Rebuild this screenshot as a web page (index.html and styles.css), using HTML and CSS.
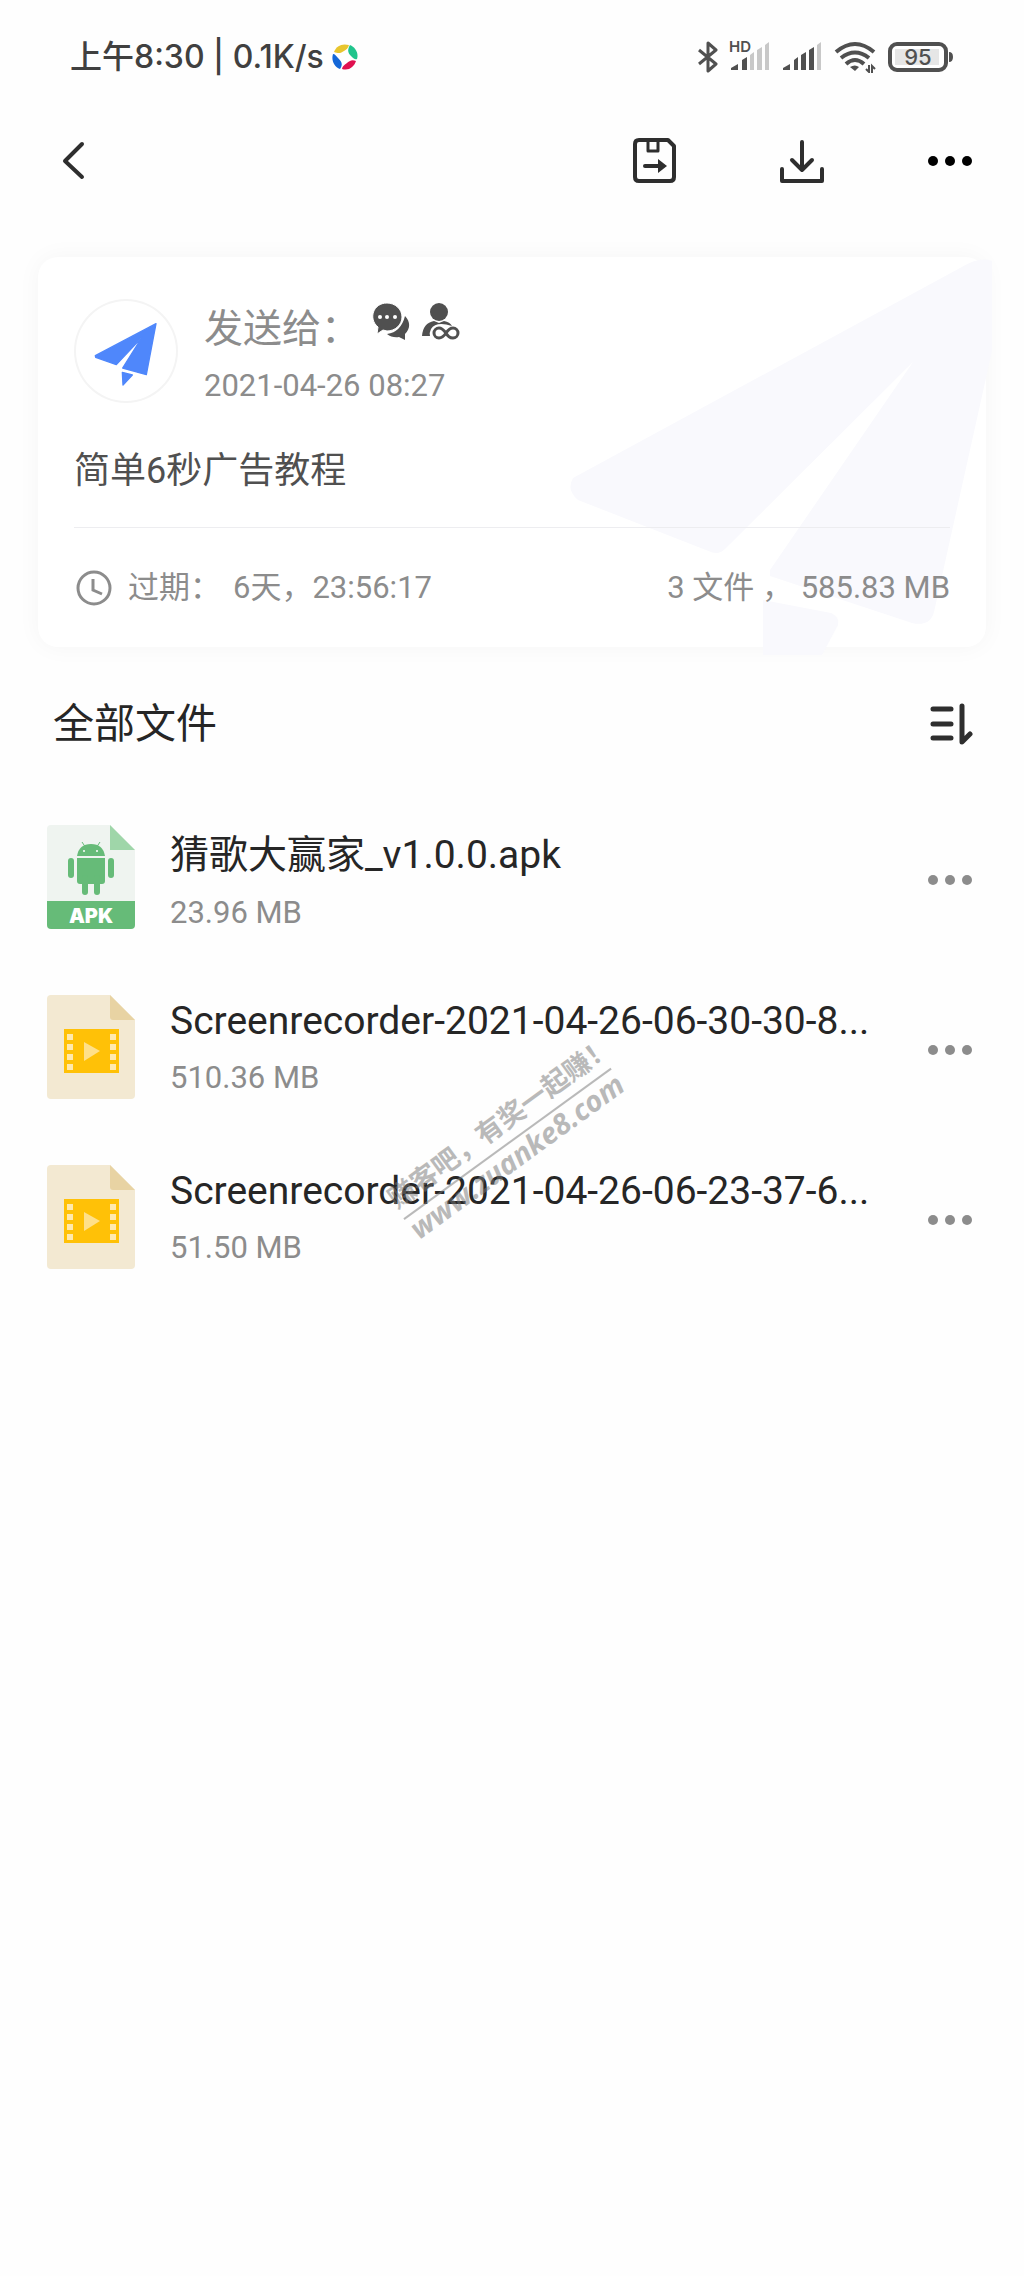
FILE: index.html
```html
<!DOCTYPE html>
<html lang="zh-CN">
<head>
<meta charset="utf-8">
<meta name="viewport" content="width=device-width, initial-scale=1">
<title>全部文件</title>
<link rel="stylesheet" href="styles.css">
</head>
<body>
<div class="status">
  <span class="status-text">上午8:30 | 0.1K/s</span>
  <svg class="status-app" width="26" height="26" viewBox="0 0 26 26" aria-hidden="true">
    <path fill="#e8c52e" d="M2 8C4 2 10-1 17 1c-1 3-2 4-5 6C9 9 7 10 2 8z"/>
    <path fill="#20c48c" d="M18 1c5 2 9 8 7 14-2 1-4-1-6-3-3-3-4-6-1-11z"/>
    <path fill="#e0104f" d="M24 17c-2 6-7 10-14 8 0-2 2-4 5-6 2-2 5-4 9-2z"/>
    <path fill="#1467d8" d="M8 25C2 23-1 16 1 10c2 0 3 2 5 4 4 4 5 6 2 11z"/>
  </svg>
  <div class="status-icons">
    <svg width="20" height="32" viewBox="0 0 20 32" aria-hidden="true"><path d="M1 9l17 14-8 7V2l8 7L1 23" fill="none" stroke="#505050" stroke-width="3" stroke-linejoin="round"/></svg>
    <div class="sim">
      <span class="sim-hd">HD</span>
      <svg width="40" height="32" viewBox="0 0 40 32" aria-hidden="true">
        <path fill="#505050" d="M1 29v-2l7-4v6zM12 29V19l5-3v13z"/>
        <path fill="#c8c8c8" d="M20 29V14l4-3v18zM27 29V9l5-3v23zM35 29V4l4-3v28z"/>
      </svg>
    </div>
    <svg width="40" height="32" viewBox="0 0 40 32" aria-hidden="true">
      <path fill="#505050" d="M1 29v-2l7-4v6zM12 29V19l4-3v13zM19 29V14l5-3v18zM27 29V9l5-3v23z"/>
      <path fill="#c8c8c8" d="M35 29V4l4-3v28z"/>
    </svg>
    <svg width="42" height="32" viewBox="0 0 42 32" aria-hidden="true">
      <path d="M2 11q19-16 38 0M7 17q14-11 28 0M12 23q9-8 18 0" fill="none" stroke="#505050" stroke-width="4"/>
      <path fill="#505050" d="M16 26q5-3 9 0l-4 4z"/>
      <path d="M32 28l3 3v-7M38 32v-7l3 3" fill="none" stroke="#505050" stroke-width="2"/>
    </svg>
    <svg width="66" height="30" viewBox="0 0 66 30" aria-hidden="true">
      <rect x="2" y="2" width="56" height="26" rx="7" fill="#fff" stroke="#505050" stroke-width="4"/>
      <rect x="7" y="7" width="44" height="16" fill="#e6e6e6"/>
      <path fill="#505050" d="M61 10q4 0 4 5t-4 5z"/>
      <text class="battery-text" x="30" y="23" text-anchor="middle">95</text>
    </svg>
  </div>
</div>

<header class="toolbar">
  <button class="icon-btn" type="button" aria-label="返回">
    <svg width="24" height="40" viewBox="0 0 24 40"><path d="M21 3L4 20l17 16" fill="none" stroke="#2e2e2e" stroke-width="4" stroke-linecap="round" stroke-linejoin="round"/></svg>
  </button>
  <div class="toolbar-actions">
    <button class="icon-btn" type="button" aria-label="保存">
      <svg width="44" height="46" viewBox="0 0 44 46"><g fill="none" stroke="#2e2e2e" stroke-width="4" stroke-linejoin="round"><path d="M6 2h29l6 6v31q0 4-4 4H6q-4 0-4-4V6q0-4 4-4z"/><path d="M15 2v11h10V2" stroke-width="3"/><path d="M12 28h17" stroke-linecap="round"/></g><path fill="#2e2e2e" d="M25 21l9 7-9 7z"/></svg>
    </button>
    <button class="icon-btn" type="button" aria-label="下载">
      <svg width="46" height="44" viewBox="0 0 46 44"><g fill="none" stroke="#2e2e2e" stroke-width="4" stroke-linecap="round" stroke-linejoin="round"><path d="M23 3v28M13 21l10 10 10-10"/><path d="M3 30v12h40V30"/></g></svg>
    </button>
    <button class="icon-btn" type="button" aria-label="更多">
      <svg width="46" height="12" viewBox="0 0 46 12"><circle cx="6" cy="6" r="5"/><circle cx="23" cy="6" r="5"/><circle cx="40" cy="6" r="5"/></svg>
    </button>
  </div>
</header>

<main>
  <section class="card">
    <svg class="card-plane" width="422" height="398" viewBox="570 257 422 398" aria-hidden="true">
      <path d="M573 478L960 268q20-12 32-7v90L934 612q-4 15-22 11l-142-47v-6L913 362 725 549q-6 6-14 3L578 500q-12-10-5-22z"/>
      <path d="M763 600l68 13q9 4 7 12l-16 30h-59z"/>
    </svg>
    <div class="sender">
      <div class="avatar">
        <svg width="104" height="104" viewBox="131 176 312 312" aria-hidden="true"><path fill="#4f87fb" stroke="#4f87fb" stroke-width="4" stroke-linejoin="round" d="M195 346L377 250l-29 153-71-20 58-92-77 82-62-22zM276 396l30 8-28 30z"/></svg>
      </div>
      <div class="sender-info">
        <div class="sender-line">
          <span class="sender-label">发送给：</span>
          <svg width="38" height="40" viewBox="0 0 38 40" aria-hidden="true">
            <path fill="#505050" d="M33 14c6 6 5 13 0 18v6l-6-3q-7 1-12-3 14-2 18-18z"/>
            <path fill="#505050" stroke="#fff" d="M15 1c8 0 15 6 15 14S23 29 15 29l-4-1-6 4 1-7C-4 17 1 1 15 1z"/>
            <g fill="#fff"><circle cx="8" cy="15" r="2"/><circle cx="15" cy="15" r="2"/><circle cx="23" cy="15" r="2"/></g>
          </svg>
          <svg width="38" height="40" viewBox="0 0 38 40" aria-hidden="true">
            <circle cx="17" cy="10" r="9" fill="#505050"/>
            <path fill="#505050" d="M0 34q1-13 12-15l5 2 5-2q6 1 8 5-16-5-21 3-2 4-1 7z"/>
            <path d="M24 31c-3-4-5-5-7-5a5 5 0 000 10c3 0 5-2 7-5s4-5 7-5a5 5 0 010 10c-3 0-5-1-7-5z" fill="none" stroke="#505050" stroke-width="3"/>
          </svg>
        </div>
        <time class="meta" datetime="2021-04-26T08:27">2021-04-26 08:27</time>
      </div>
    </div>
    <p class="message">简单6秒广告教程</p>
    <div class="card-foot meta">
      <svg width="36" height="36" viewBox="0 0 36 36" aria-hidden="true"><g fill="none" stroke="#8c8c8c" stroke-width="3"><circle cx="18" cy="18" r="16"/><path d="M17 9v11l9 4"/></g></svg>
      <span>过期：</span>
      <span>6天，23:56:17</span>
      <span class="total">3 文件 ， 585.83 MB</span>
    </div>
  </section>

  <section class="files">
    <div class="files-head">
      <h1>全部文件</h1>
      <button class="icon-btn" type="button" aria-label="排序">
        <svg width="44" height="44" viewBox="0 0 44 44"><g fill="none" stroke="#2e2e2e" stroke-width="5" stroke-linecap="round" stroke-linejoin="round"><path d="M4 7h18M4 22h18M4 36h18"/><path d="M33 4v36l8-8"/></g></svg>
      </button>
    </div>
    <ul class="list">
      <li class="row">
        <svg width="88" height="104" viewBox="0 0 88 104" aria-hidden="true">
          <path fill="#eff4f0" d="M4 0h59l25 25v51H0V4q0-4 4-4z"/>
          <path fill="#9fd6a9" d="M63 0l25 25H63z"/>
          <path fill="#66bb78" d="M0 76h88v24q0 4-4 4H4q-4 0-4-4z"/>
          <g fill="#66bb78"><path d="M30 31q2-12 14-12t14 12z"/><path d="M30 33h28v23q0 3-3 3H33q-3 0-3-3z"/><rect x="21" y="33" width="6" height="20" rx="3"/><rect x="61" y="33" width="6" height="20" rx="3"/><rect x="35" y="50" width="6" height="20" rx="3"/><rect x="47" y="50" width="6" height="20" rx="3"/></g>
          <path d="M35 17l4 6M53 17l-4 6" stroke="#66bb78"/>
          <circle cx="37" cy="26" r="1" fill="#fff"/><circle cx="50" cy="26" r="1" fill="#fff"/>
          <text class="apk-label" x="44" y="98" text-anchor="middle">APK</text>
        </svg>
        <div class="file-text"><div class="file-name">猜歌大赢家_v1.0.0.apk</div><div class="meta">23.96 MB</div></div>
        <button class="icon-btn more" type="button" aria-label="更多"><svg width="46" height="12" viewBox="0 0 46 12"><circle cx="6" cy="6" r="5"/><circle cx="23" cy="6" r="5"/><circle cx="40" cy="6" r="5"/></svg></button>
      </li>
      <li class="row">
        <svg width="88" height="104" viewBox="0 0 88 104" aria-hidden="true">
          <g id="video">
            <path fill="#f3e9d2" d="M4 0h59l25 25v75q0 4-4 4H4q-4 0-4-4V4q0-4 4-4z"/>
            <path fill="#e8d3a3" d="M63 0l25 25H66q-3 0-3-3z"/>
            <rect x="17" y="34" width="55" height="44" fill="#ffc107"/>
            <path fill="#ffe08a" d="M37 47l16 9-16 10z"/>
            <path d="M23 39v37M66 39v37" stroke="#ffe9ae" stroke-width="6" stroke-dasharray="6 4"/>
          </g>
        </svg>
        <div class="file-text"><div class="file-name">Screenrecorder-2021-04-26-06-30-30-8...</div><div class="meta">510.36 MB</div></div>
        <button class="icon-btn more" type="button" aria-label="更多"><svg width="46" height="12" viewBox="0 0 46 12"><circle cx="6" cy="6" r="5"/><circle cx="23" cy="6" r="5"/><circle cx="40" cy="6" r="5"/></svg></button>
      </li>
      <li class="row">
        <svg width="88" height="104" viewBox="0 0 88 104" aria-hidden="true"><use href="#video"/></svg>
        <div class="file-text"><div class="file-name">Screenrecorder-2021-04-26-06-23-37-6...</div><div class="meta">51.50 MB</div></div>
        <button class="icon-btn more" type="button" aria-label="更多"><svg width="46" height="12" viewBox="0 0 46 12"><circle cx="6" cy="6" r="5"/><circle cx="23" cy="6" r="5"/><circle cx="40" cy="6" r="5"/></svg></button>
      </li>
    </ul>
    <div class="stamp">
      <div class="stamp-top">赚客吧，有奖一起赚！</div>
      <div class="stamp-url">www.zuanke8.com</div>
    </div>
  </section>
</main>
</body>
</html>
```
FILE: styles.css
```css
* { box-sizing: border-box; }

body {
  margin: 0;
  background: #fefefe;
  color: #262626;
  font-family: Roboto, "Noto Sans CJK SC", sans-serif;
}

svg { display: block; flex: none; }

.icon-btn {
  padding: 0;
  border: 0;
  background: none;
  color: #000;
  cursor: pointer;
}

.status {
  display: flex;
  align-items: center;
  height: 114px;
  padding: 0 70px;
  color: #404040;
}

.status-text {
  font: 500 32px/40px Inter, "Noto Sans CJK SC", sans-serif;
  white-space: nowrap;
}

.status-app { margin-left: 8px; }

.status-icons {
  display: flex;
  align-items: center;
  gap: 12px;
  margin-left: auto;
}

.sim { position: relative; }

.sim-hd {
  position: absolute;
  top: -4px;
  left: -1px;
  color: #505050;
  font: 600 15px/20px Inter, sans-serif;
}

.battery-text { font: 500 22px Inter, sans-serif; fill: #505050; }

.toolbar {
  display: flex;
  align-items: center;
  justify-content: space-between;
  height: 94px;
  padding: 0 51px 0 61px;
}

.toolbar-actions {
  display: flex;
  align-items: center;
  gap: 102px;
}

.card {
  position: relative;
  margin: 49px 38px 0;
  padding: 42px 36px 0;
  border-radius: 20px;
  background: #fff;
  box-shadow: 0 0 24px rgba(0, 0, 0, 0.04);
}

.card-plane {
  position: absolute;
  right: -6px;
  bottom: -8px;
  fill: #f9f9fd;
}

.sender,
.message,
.card-foot { position: relative; }

.sender { display: flex; gap: 26px; }

.avatar {
  width: 104px;
  height: 104px;
  border-radius: 50%;
  background: #fff;
  box-shadow: inset 0 0 0 2px #f4f4f4;
}

.sender-line {
  display: flex;
  gap: 12px;
  height: 63px;
}

.sender-label {
  width: 156px;
  color: #8c8c8c;
  font-size: 39px;
  line-height: 60px;
}

.sender-line svg { margin-top: 3px; }

.meta {
  color: #8c8c8c;
  font-size: 31px;
  line-height: 48px;
}

time.meta { display: block; }

.message {
  margin: 34px 0 29px;
  color: #505050;
  font-size: 36px;
  line-height: 54px;
}

.card-foot {
  display: flex;
  align-items: center;
  height: 120px;
  border-top: 1px solid #ededf0;
  white-space: nowrap;
}

.card-foot svg { margin: 0 16px 0 2px; }
.card-foot span + span { margin-left: 12px; }
.card-foot .total { margin-left: auto; }

.files { position: relative; }

.files-head {
  display: flex;
  align-items: center;
  justify-content: space-between;
  height: 136px;
  margin-top: 9px;
  padding: 0 51px 0 53px;
}

h1 {
  margin: 0;
  font-size: 41px;
  font-weight: 400;
  line-height: 60px;
}

.list {
  margin: 0;
  padding: 0;
  list-style: none;
}

.row {
  display: flex;
  align-items: center;
  height: 170px;
  padding: 0 51px 0 47px;
}

.file-text {
  display: grid;
  flex: 1;
  gap: 10px;
  min-width: 0;
  margin-left: 35px;
  padding-top: 6px;
}

.file-name {
  overflow: hidden;
  font-size: 39px;
  white-space: nowrap;
  text-overflow: ellipsis;
}

.more svg { margin-top: 6px; fill: #8c8c8c; }

.apk-label { font: 900 20px Inter, sans-serif; fill: #fff; }

.stamp {
  position: absolute;
  top: 448px;
  left: 376px;
  width: 256px;
  color: #777;
  opacity: 0.5;
  pointer-events: none;
  transform: rotate(-36deg);
  white-space: nowrap;
}

.stamp-top {
  border-bottom: 2px solid;
  font-size: 27px;
  font-weight: 700;
  line-height: 40px;
}

.stamp-url {
  font: italic 700 29px/28px "Open Sans", sans-serif;
}
```
